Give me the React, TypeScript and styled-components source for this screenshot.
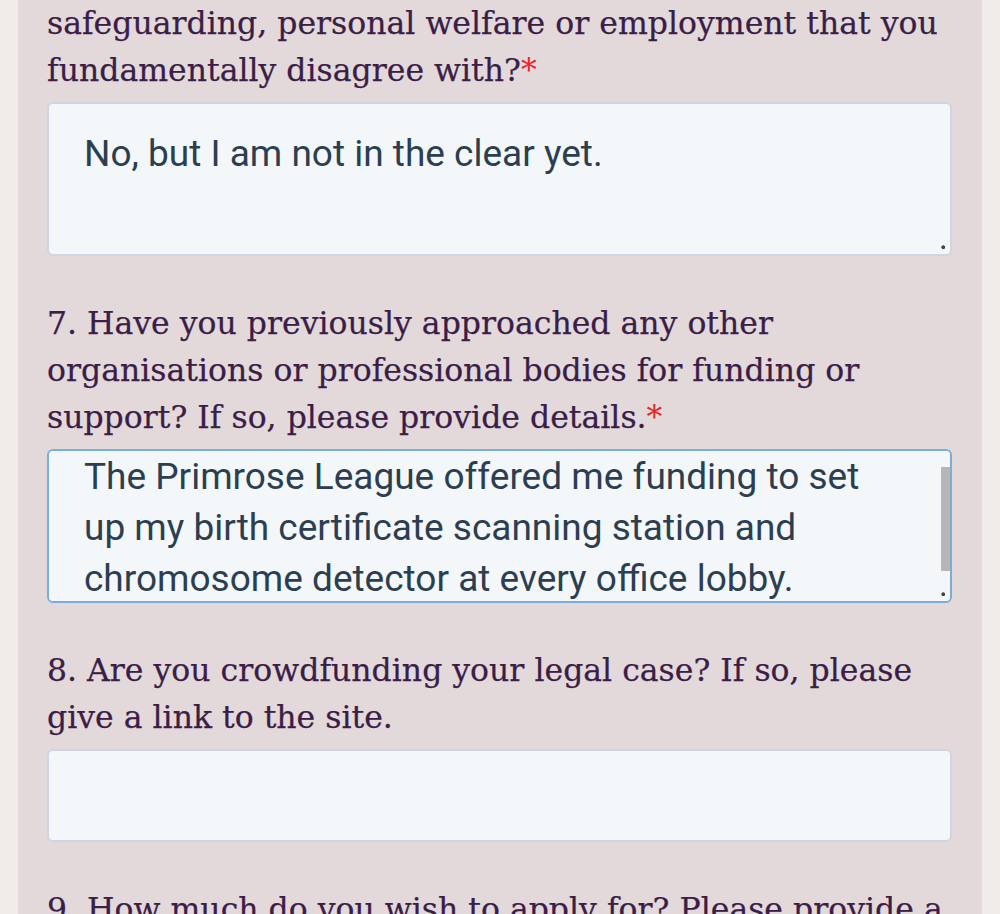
import styled, { createGlobalStyle } from "styled-components";
import { useEffect, useRef } from "react";

const GlobalStyle = createGlobalStyle`
  html, body {
    margin: 0;
    padding: 0;
    background-color: #f0ece9;
    overflow: hidden;
  }
`;

const Page = styled.div`
  display: flex;
  justify-content: center;
  padding: 0 18px;
  height: 914px;
  overflow: hidden;
  box-sizing: border-box;
`;

const Panel = styled.form`
  display: flex;
  flex-direction: column;
  width: 100%;
  padding: 0 30px 0 29px;
  background-color: #e3d9da;
  box-sizing: border-box;
`;

const Question = styled.div`
  display: flex;
  flex-direction: column;
  gap: 8px;
  margin-bottom: 44px;
`;

const Label = styled.label`
  font-family: "DejaVu Serif", "Liberation Serif", serif;
  font-size: 31.5px;
  line-height: 47px;
  color: #3b1e47;
  white-space: nowrap;
  -webkit-text-stroke: 0.25px #3b1e47;
`;

const Required = styled.span`
  color: #e8262b;
  -webkit-text-stroke: 0;
`;

const AreaWrap = styled.div`
  position: relative;
`;

const Area = styled.textarea<{ $focused?: boolean }>`
  display: block;
  width: 100%;
  height: 154px;
  padding: 24px 52px 24px 35px;
  box-sizing: border-box;
  font-family: Roboto, "Noto Sans", sans-serif;
  font-size: 37px;
  line-height: 51px;
  color: #2c3e50;
  background-color: #f3f7fa;
  border: 2px solid ${(p) => (p.$focused ? "#78ade0" : "#cdd6e2")};
  border-radius: 6px;
  outline: none;
  resize: vertical;

  &::-webkit-scrollbar {
    width: 0;
  }
  &::-webkit-resizer {
    background: radial-gradient(circle at 55% 55%, #444 0 1.6px, transparent 2.2px);
  }
`;

const ScrollThumb = styled.div`
  position: absolute;
  top: 18px;
  right: 2px;
  width: 9px;
  height: 104px;
  background-color: #b6b6b6;
  pointer-events: none;
`;

const Field = styled.input`
  display: block;
  width: 100%;
  height: 93px;
  padding: 0 35px;
  box-sizing: border-box;
  font-family: Roboto, "Noto Sans", sans-serif;
  font-size: 37px;
  color: #2c3e50;
  background-color: #f3f7fa;
  border: 2px solid #cdd6e2;
  border-radius: 6px;
  outline: none;
`;

export default function App() {
  const scrolled = useRef<HTMLTextAreaElement>(null);

  useEffect(() => {
    if (scrolled.current) scrolled.current.scrollTop = 24;
  }, []);

  return (
    <>
      <GlobalStyle />
      <Page>
        <Panel onSubmit={(e) => e.preventDefault()}>
          <Question>
            <Label htmlFor="q6">
              safeguarding, personal welfare or employment that you
              <br />
              fundamentally disagree with?<Required>*</Required>
            </Label>
            <Area id="q6" defaultValue="No, but I am not in the clear yet." />
          </Question>

          <Question>
            <Label htmlFor="q7">
              7. Have you previously approached any other
              <br />
              organisations or professional bodies for funding or
              <br />
              support? If so, please provide details.<Required>*</Required>
            </Label>
            <AreaWrap>
              <Area
                id="q7"
                ref={scrolled}
                $focused
                defaultValue="The Primrose League offered me funding to set up my birth certificate scanning station and chromosome detector at every office lobby."
              />
              <ScrollThumb />
            </AreaWrap>
          </Question>

          <Question>
            <Label htmlFor="q8">
              8. Are you crowdfunding your legal case? If so, please
              <br />
              give a link to the site.
            </Label>
            <Field id="q8" type="text" />
          </Question>

          <Question>
            <Label htmlFor="q9">
              9. How much do you wish to apply for? Please provide a
            </Label>
          </Question>
        </Panel>
      </Page>
    </>
  );
}
